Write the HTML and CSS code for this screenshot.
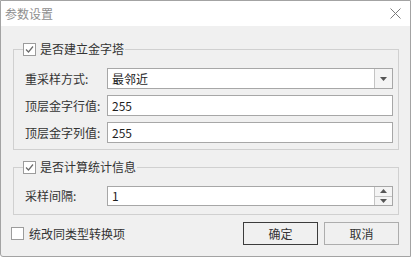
FILE: index.html
```html
<!DOCTYPE html>
<html lang="zh-CN">

<head>
     <meta charset="UTF-8">
     <meta name="viewport" content="width=device-width, initial-scale=1.0">
     <title>参数设置</title>
     <link rel="stylesheet" href="styles.css">
</head>

<body>
     <div class="dialog">
          <div class="titlebar">
               <span class="title">参数设置</span>
               <svg class="close" width="11" height="11" viewBox="0 0 11 11">
                    <path d="M0.5 0.5 L10.5 10.5 M10.5 0.5 L0.5 10.5" stroke="#7a7a7a" stroke-width="1" fill="none" />
               </svg>
          </div>

          <div class="content">
               <!-- pyramid group -->
               <fieldset class="group group-pyramid">
                    <legend>
                         <span class="check">
                              <svg width="11" height="11" viewBox="0 0 11 11">
                                   <polyline points="2,5.5 4.5,8 9,2.5" stroke="#6a6a6a" stroke-width="1.2" fill="none" />
                              </svg>
                         </span>
                         是否建立金字塔
                    </legend>
                    <div class="row">
                         <label>重采样方式:</label>
                         <div class="combo">
                              <span class="value">最邻近</span>
                              <span class="combo-btn">
                                   <svg width="7" height="4" viewBox="0 0 7 4"><path d="M0 0 H7 L3.5 4 Z" fill="#555" /></svg>
                              </span>
                         </div>
                    </div>
                    <div class="row">
                         <label>顶层金字行值:</label>
                         <div class="field">255</div>
                    </div>
                    <div class="row">
                         <label>顶层金字列值:</label>
                         <div class="field">255</div>
                    </div>
               </fieldset>

               <!-- statistics group -->
               <fieldset class="group group-stats">
                    <legend>
                         <span class="check">
                              <svg width="11" height="11" viewBox="0 0 11 11">
                                   <polyline points="2,5.5 4.5,8 9,2.5" stroke="#6a6a6a" stroke-width="1.2" fill="none" />
                              </svg>
                         </span>
                         是否计算统计信息
                    </legend>
                    <div class="row">
                         <label>采样间隔:</label>
                         <div class="spin">
                              <span class="value">1</span>
                              <span class="spin-btns">
                                   <span class="spin-up"><svg width="7" height="4" viewBox="0 0 7 4"><path d="M0 4 H7 L3.5 0 Z" fill="#555" /></svg></span>
                                   <span class="spin-down"><svg width="7" height="4" viewBox="0 0 7 4"><path d="M0 0 H7 L3.5 4 Z" fill="#555" /></svg></span>
                              </span>
                         </div>
                    </div>
               </fieldset>

               <div class="footer">
                    <label class="option"><span class="check"></span>统改同类型转换项</label>
                    <div class="buttons">
                         <button class="btn btn-default">确定</button>
                         <button class="btn">取消</button>
                    </div>
               </div>
          </div>
     </div>
</body>

</html>
```

FILE: styles.css
```css
/* Base styles */
body {
     margin: 0;
     background: #ffffff;
     font-family: "Noto Sans CJK SC", "Noto Sans", sans-serif;
     font-size: 12px;
     color: #333333;
}

/* Dialog window */
.dialog {
     width: 411px;
     height: 257px;
     box-sizing: border-box;
     border: 1px solid #a3a3a3;
     border-bottom-left-radius: 3px;
     background: #f0f0f0;
     display: flex;
     flex-direction: column;
}

.titlebar {
     height: 25px;
     flex: none;
     background: #ffffff;
     display: flex;
     align-items: center;
     justify-content: space-between;
     padding: 0 9px 0 4px;
}

.titlebar .title {
     color: #8e8e8e;
     line-height: 14px;
}

.close {
     display: block;
}

.content {
     padding: 15px 11px 0 10px;
}

/* Group boxes */
.group {
     margin: 0 0 0 2px;
     border: 1px solid #d0d0d0;
     padding: 11px 5px 6px 11px;
     min-width: 0;
}

.group legend {
     margin-left: -2px;
     padding: 0 1px 0 0;
     height: 16px;
     line-height: 16px;
     display: flex;
     align-items: center;
     gap: 4px;
     color: #333333;
}

.group-stats {
     margin-top: 9px;
     padding-bottom: 8px;
}

.check {
     width: 13px;
     height: 13px;
     box-sizing: border-box;
     border: 1px solid #9c9c9c;
     background: #ffffff;
     display: inline-flex;
     align-items: center;
     justify-content: center;
     flex: none;
}

.check svg {
     display: block;
}

.row {
     display: flex;
     align-items: center;
}

.row + .row {
     margin-top: 6px;
}

.row label {
     width: 82px;
     flex: none;
     line-height: 14px;
}

/* Inputs */
.combo,
.field,
.spin {
     flex: 1;
     height: 21px;
     box-sizing: border-box;
     border: 1px solid #a7a7a7;
     background: #ffffff;
     display: flex;
     align-items: center;
     color: #1e1e1e;
}

.field,
.combo .value,
.spin .value {
     padding-left: 4px;
     flex: 1;
     line-height: 14px;
}

.combo-btn {
     width: 17px;
     align-self: stretch;
     border-left: 1px solid #c4c4c4;
     background: #f4f4f4;
     display: flex;
     align-items: center;
     justify-content: center;
}

.spin {
     height: 20px;
}

.spin-btns {
     width: 17px;
     align-self: stretch;
     border-left: 1px solid #c4c4c4;
     display: flex;
     flex-direction: column;
}

.spin-up,
.spin-down {
     flex: 1;
     display: flex;
     align-items: center;
     justify-content: center;
     background: #f4f4f4;
}

.spin-up {
     border-bottom: 1px solid #c4c4c4;
}

.spin svg,
.combo-btn svg {
     display: block;
}

/* Footer */
.footer {
     margin: 7px 0 0 0;
     display: flex;
     align-items: center;
     justify-content: space-between;
}

.option {
     display: flex;
     align-items: center;
     gap: 5px;
     line-height: 14px;
}

.buttons {
     display: flex;
     gap: 6px;
}

.btn {
     width: 75px;
     height: 23px;
     box-sizing: border-box;
     border: 1px solid #adadad;
     background: #f0f0f0;
     font-family: inherit;
     font-size: 12px;
     color: #333333;
     padding: 0;
}

.btn-default {
     border-color: #3c3c3c;
}
```
